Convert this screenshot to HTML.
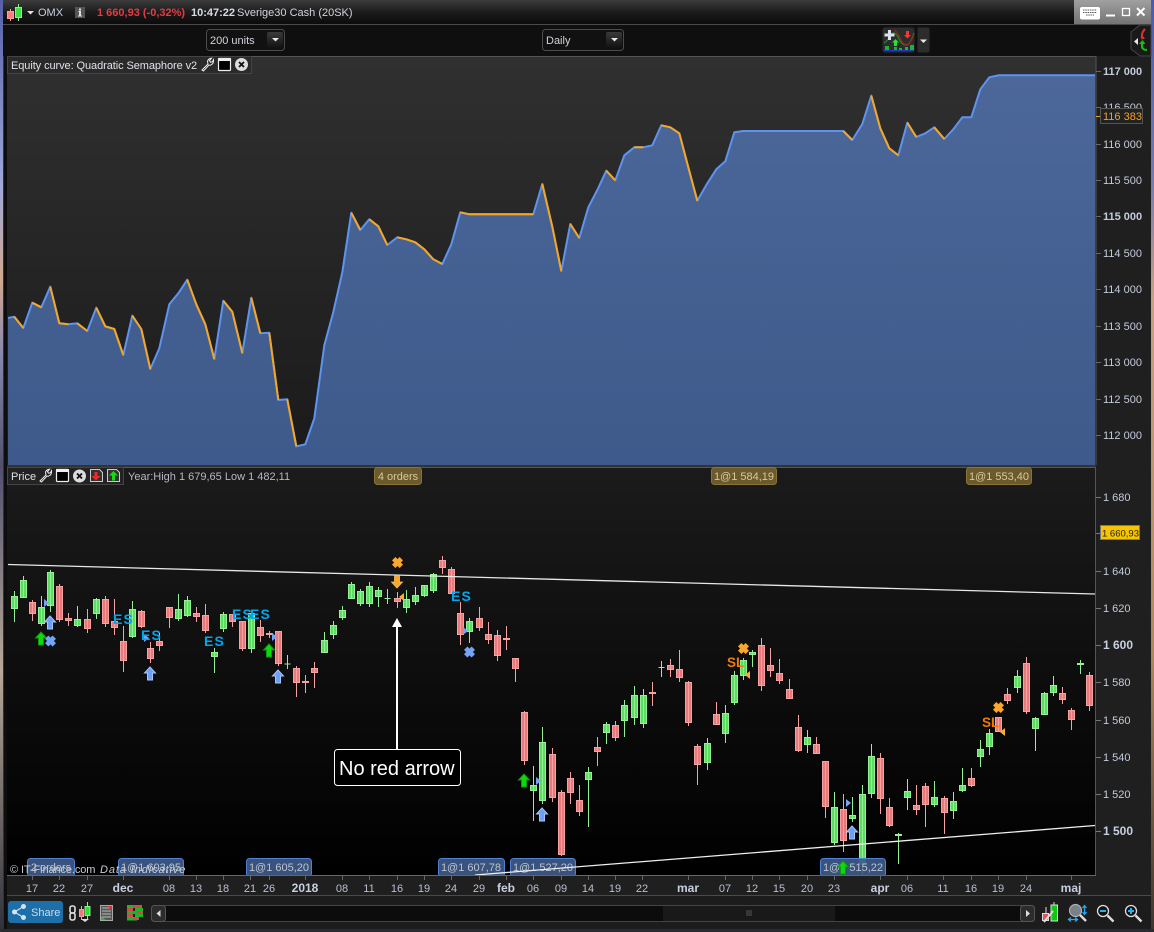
<!DOCTYPE html>
<html><head><meta charset="utf-8"><title>Chart</title>
<style>
html,body{margin:0;padding:0;background:#000;width:1154px;height:932px;overflow:hidden}
svg{display:block;position:absolute;left:0;top:0;font-family:"Liberation Sans",sans-serif;font-size:11px}
text{white-space:pre}
.ax{fill:#c4cbdc}
.axb{fill:#c8cfe0;font-weight:bold;font-size:12px}
.xl{fill:#b8c0d0;text-anchor:middle;font-size:11px}
.xb{fill:#c8cfe0;text-anchor:middle;font-size:12px;font-weight:bold}
.es{fill:#00a6ee;font-weight:bold;font-size:14px;letter-spacing:1.1px}
.sl{fill:#f07c00;font-weight:bold;font-size:13.5px}
.tg{fill:#bcc4d0;text-anchor:middle}
.tt{fill:#d8c89c;text-anchor:middle}
</style></head><body>
<svg width="1154" height="932" viewBox="0 0 1154 932" xmlns="http://www.w3.org/2000/svg">
<defs>
<linearGradient id="top" x1="0" y1="0" x2="0" y2="1"><stop offset="0" stop-color="#3c3c3c"/><stop offset=".5" stop-color="#1c1c1c"/><stop offset="1" stop-color="#0b0b0b"/></linearGradient>
<linearGradient id="eq" x1="0" y1="0" x2="0" y2="1"><stop offset="0" stop-color="#303030"/><stop offset="1" stop-color="#1a1a1a"/></linearGradient>
<linearGradient id="pr" x1="0" y1="0" x2="0" y2="1"><stop offset="0" stop-color="#1b1b1b"/><stop offset="1" stop-color="#000"/></linearGradient>
<linearGradient id="fill" gradientUnits="userSpaceOnUse" x1="0" y1="75" x2="0" y2="465"><stop offset="0" stop-color="#4c6799"/><stop offset="1" stop-color="#3d5a8b"/></linearGradient>
<linearGradient id="wl" x1="0" y1="0" x2="0" y2="1"><stop offset="0" stop-color="#5560a8"/><stop offset=".2" stop-color="#9fa8d8"/><stop offset=".3" stop-color="#d0a890"/><stop offset=".38" stop-color="#8888b0"/><stop offset=".5" stop-color="#50506e"/><stop offset=".72" stop-color="#b8a898"/><stop offset="1" stop-color="#30303c"/></linearGradient>
<linearGradient id="wr" x1="0" y1="0" x2="0" y2="1"><stop offset="0" stop-color="#4a5ab0"/><stop offset=".2" stop-color="#7a7cb0"/><stop offset=".32" stop-color="#c8a080"/><stop offset=".7" stop-color="#b08858"/><stop offset="1" stop-color="#40342c"/></linearGradient>
<linearGradient id="ctl" x1="0" y1="0" x2="0" y2="1"><stop offset="0" stop-color="#a0a0a0"/><stop offset="1" stop-color="#747474"/></linearGradient>
<linearGradient id="btn" x1="0" y1="0" x2="0" y2="1"><stop offset="0" stop-color="#3a3a3a"/><stop offset="1" stop-color="#111"/></linearGradient>
<path id="ub" d="M0-6.5 5.5-.5H2.5V6.5H-2.5V-.5H-5.500Z" fill="#6d9ff5" stroke="#a6c6fb" stroke-width="1"/>
<path id="ug" d="M0-6.5 5.5-.5H2.5V6.5H-2.5V-.5H-5.500Z" fill="#10d810" stroke="#0a9a0a" stroke-width="1"/>
<path id="xb" d="M-3.800-3.800 3.800 3.800M3.800-3.800-3.800 3.800" stroke="#74a4f8" stroke-width="4.800" fill="none"/>
<path id="xo" d="M-3.800-3.800 3.800 3.800M3.800-3.800-3.800 3.800" stroke="#f8a830" stroke-width="4.800" fill="none"/>
<path id="tb" d="M-2-4 3 0-2 4Z" fill="#74a4f8"/>
<path id="to" d="M2-4-3 0 2 4Z" fill="#f8b030"/>
</defs>

<!-- window base -->
<rect width="1154" height="932" fill="#1f1f1f"/>
<rect x="0" y="0" width="3" height="932" fill="url(#wl)"/>
<rect x="1151" y="0" width="3" height="932" fill="url(#wr)"/>
<rect x="3" y="0" width="4" height="932" fill="#0e0e0e"/>
<rect x="3" y="24" width="1" height="905" fill="#333"/>
<rect x="0" y="929" width="1154" height="3" fill="#2a2a36"/>

<!-- title bar -->
<rect x="3" y="0" width="1148" height="24" fill="url(#top)"/>
<rect x="3" y="24" width="1148" height="1" fill="#4a4a4a"/>
<rect x="3" y="25" width="1148" height="31" fill="#0f0f0f"/>
<path d="M10.500 9V21" stroke="#f8a0a0"/><rect x="7.500" y="11.500" width="6" height="7" fill="#f88080" stroke="#f8a0a0"/>
<path d="M18.500 4V21" stroke="#8cf08c"/><rect x="15.500" y="7.500" width="6" height="10" fill="#40e040" stroke="#8cf08c"/>
<path d="M27 11h7l-3.500 3.500z" fill="#e0e0e0"/>
<text x="38" y="16" fill="#c8d0e0">OMX</text>
<rect x="75" y="7" width="10" height="11" fill="#555"/><path d="M79 8.500h2v2h-2zM78.500 11h2.500v4.500h1v1h-4v-1h1v-3.500h-.5z" fill="#ddd"/>
<text x="97" y="16" fill="#e23c44" font-weight="bold">1 660,93 (-0,32%)</text>
<text x="191" y="16" fill="#d8dce4" font-weight="bold">10:47:22</text>
<text x="237" y="16" fill="#d0d4dc">Sverige30 Cash (20SK)</text>

<!-- window controls -->
<rect x="1074" y="0" width="77" height="24" fill="url(#ctl)"/>
<rect x="1080" y="7" width="20" height="12.500" rx="2" fill="#fff"/>
<path d="M1083 10h14M1083 12.500h14M1086 15h8" stroke="#555" stroke-width="1" stroke-dasharray="1.500 .8"/>
<rect x="1106" y="14.500" width="9" height="2" fill="#fff"/>
<rect x="1122.500" y="8.500" width="7" height="7" fill="none" stroke="#fff" stroke-width="1.300"/>
<path d="M1137 8l7.500 7.500M1144.500 8l-7.500 7.500" stroke="#fff" stroke-width="2"/>

<!-- toolbar -->
<rect x="206.500" y="29.500" width="78" height="21" rx="3" fill="#111" stroke="#4c4c4c"/>
<text x="210" y="44" fill="#d0d4dc">200 units</text>
<rect x="267" y="32" width="16" height="16" rx="2" fill="url(#btn)"/><path d="M272 38h7l-3.500 3.500z" fill="#e8e8e8"/>
<rect x="542.500" y="29.500" width="81" height="21" rx="3" fill="#111" stroke="#4c4c4c"/>
<text x="546" y="44" fill="#d0d4dc">Daily</text>
<rect x="606" y="32" width="16" height="16" rx="2" fill="url(#btn)"/><path d="M611 38h7l-3.500 3.500z" fill="#e8e8e8"/>
<rect x="882" y="27" width="33" height="26" rx="3" fill="#2c2c2c" stroke="#111"/>
<rect x="917" y="27" width="13" height="26" rx="2" fill="#2c2c2c" stroke="#111"/><path d="M920 39.500h7l-3.500 3.500z" fill="#e8e8e8"/>
<path d="M884 43q4-2 6-8 4-5 8 2 3 8 8 8 4 0 8-12" fill="none" stroke="#1a8a2a" stroke-width="1.200"/>
<path d="M894 30q4 2 7 10 3 6 7 4 4-3 6-10" fill="none" stroke="#922" stroke-width="1.200"/>
<path d="M888 30h3v3.500h3.500v3h-3.500v3.500h-3v-3.500h-3.500v-3h3.500z" fill="#dde0ee"/>
<path d="M906 31h3v4h2l-3.500 3.500-3.500-3.500h2z" fill="#f03838"/>
<path d="M895.500 39l3.500 3.500h-2v3.500h-3v-3.500h-2z" fill="#28e038"/>
<path d="M885 46h4v4h-4zM894 47h3v3h-3zM899 48h3v2h-3zM905 47h3v3h-3zM910 45h4v5h-4z" fill="#14b828"/>
<rect x="884" y="50" width="30" height="1" fill="#2838c8"/>
<path d="M1140 25h11v31h-11l-9-7v-17z" fill="#1a1a1a" stroke="#444"/>
<path d="M1138 38l-4 3.500 4 3.500z" fill="#e8e8e8"/>
<path d="M1145 29q-4 4-3 9" stroke="#e03030" stroke-width="2" fill="none"/><path d="M1142 35l3 3.500-4 1z" fill="#e03030"/>
<path d="M1142 42v5q1 3 5 3" stroke="#14c014" stroke-width="2" fill="none"/><path d="M1139 44l3.500-4 3 4z" fill="#14c014"/>

<!-- equity panel -->
<rect x="7" y="56" width="1089" height="409" fill="url(#eq)"/>
<path d="M7 56.500H1096V465" fill="none" stroke="#555"/>
<path d="M8 465V318L14.300 316.700 23.300 328 32.300 302.700 41.300 307.300 50.300 286.700 59.300 323.300 68.300 324.300 77.300 323.300 87.300 331 96.300 307.700 105.300 326.300 114.300 329 123.300 355 132.300 315.700 141.300 329 150.300 369 159.300 348.300 169.300 304.300 178.300 293.300 187.300 279.700 196.300 304.300 205.300 324.300 214.300 359 223.300 300.700 232.300 311.700 242.300 353 251.300 297.700 260.300 333.300 269.300 332.700 278.300 400 287.300 399.300 296.300 446.300 305.300 444.300 314.300 418.300 324.300 345.300 333.300 312 342.300 272.300 351.300 212.700 360.300 230 369.300 219.300 378.300 226.300 387.300 245 397.300 237.300 406.300 239.300 415.300 242.300 424.300 249.300 433.300 259.300 442.300 264 451.300 244.300 460.300 212.300 469.300 214.300 533.300 214.300 542.300 184 552.300 226.700 561.300 271 570.300 224 579.300 238 588.300 207.300 597.300 190 606.300 170.700 615.300 180.300 624.300 155.300 634.300 147.300 643.300 147.300 652.300 145.300 661.300 125.300 670.300 127.300 679.300 133.300 688.300 167.300 697.300 200.700 707.300 183.300 716.300 169.300 725.300 161.300 734.300 132.300 743.300 131 843.300 131 852.300 140 862.300 124 871.300 95.700 880.300 128.300 889.300 148.300 898.300 155.300 907.300 122.700 916.300 137 925.300 133.300 934.300 127.300 944.300 139 953.300 129.300 962.300 117.300 971.300 117.300 980.300 89.300 989.300 77.300 998.300 75.300 1095 75.300V465Z" fill="url(#fill)"/>
<path d="M8 318L14.300 316.700 23.300 328 32.300 302.700 41.300 307.300 50.300 286.700 59.300 323.300 68.300 324.300 77.300 323.300 87.300 331 96.300 307.700 105.300 326.300 114.300 329 123.300 355 132.300 315.700 141.300 329 150.300 369 159.300 348.300 169.300 304.300 178.300 293.300 187.300 279.700 196.300 304.300 205.300 324.300 214.300 359 223.300 300.700 232.300 311.700 242.300 353 251.300 297.700 260.300 333.300 269.300 332.700 278.300 400 287.300 399.300 296.300 446.300 305.300 444.300 314.300 418.300 324.300 345.300 333.300 312 342.300 272.300 351.300 212.700 360.300 230 369.300 219.300 378.300 226.300 387.300 245 397.300 237.300 406.300 239.300 415.300 242.300 424.300 249.300 433.300 259.300 442.300 264 451.300 244.300 460.300 212.300 469.300 214.300 533.300 214.300 542.300 184 552.300 226.700 561.300 271 570.300 224 579.300 238 588.300 207.300 597.300 190 606.300 170.700 615.300 180.300 624.300 155.300 634.300 147.300 643.300 147.300 652.300 145.300 661.300 125.300 670.300 127.300 679.300 133.300 688.300 167.300 697.300 200.700 707.300 183.300 716.300 169.300 725.300 161.300 734.300 132.300 743.300 131 843.300 131 852.300 140 862.300 124 871.300 95.700 880.300 128.300 889.300 148.300 898.300 155.300 907.300 122.700 916.300 137 925.300 133.300 934.300 127.300 944.300 139 953.300 129.300 962.300 117.300 971.300 117.300 980.300 89.300 989.300 77.300 998.300 75.300 1095 75.300" fill="none" stroke="#5f93f0" stroke-width="2" stroke-linejoin="round"/>
<path d="M14.300 316.700 23.300 328M32.300 302.700 41.300 307.300M50.300 286.700 59.300 323.300 68.300 324.300M77.300 323.300 87.300 331M96.300 307.700 105.300 326.300 114.300 329 123.300 355M132.300 315.700 141.300 329 150.300 369M187.300 279.700 196.300 304.300 205.300 324.300 214.300 359M223.300 300.700 232.300 311.700 242.300 353M251.300 297.700 260.300 333.300M269.300 332.700 278.300 400M287.300 399.300 296.300 446.300M351.300 212.700 360.300 230M369.300 219.300 378.300 226.300 387.300 245M397.300 237.300 406.300 239.300 415.300 242.300 424.300 249.300 433.300 259.300 442.300 264M460.300 212.300 469.300 214.300 533.300 214.300M542.300 184 552.300 226.700 561.300 271M570.300 224 579.300 238M606.300 170.700 615.300 180.300M634.300 147.300 643.300 147.300M661.300 125.300 670.300 127.300 679.300 133.300 688.300 167.300 697.300 200.700M843.300 131 852.300 140M871.300 95.700 880.300 128.300 889.300 148.300 898.300 155.300M907.300 122.700 916.300 137M934.300 127.300 944.300 139" fill="none" stroke="#f5a624" stroke-width="2" stroke-linejoin="round"/>

<!-- equity axis -->
<path d="M1096 71.500h5M1096 107.500h5M1096 144.500h5M1096 180.500h5M1096 216.500h5M1096 253.500h5M1096 289.500h5M1096 326.500h5M1096 362.500h5M1096 399.500h5M1096 435.500h5" stroke="#666"/>
<g class="ax">
<text x="1103" y="75" font-weight="bold">117 000</text>
<text x="1103" y="111">116 500</text>
<text x="1103" y="148">116 000</text>
<text x="1103" y="184">115 500</text>
<text x="1103" y="220" font-weight="bold">115 000</text>
<text x="1103" y="257">114 500</text>
<text x="1103" y="293">114 000</text>
<text x="1103" y="330">113 500</text>
<text x="1103" y="366">113 000</text>
<text x="1103" y="403">112 500</text>
<text x="1103" y="439">112 000</text>
</g>
<path d="M1096 116.500h5" stroke="#f2a224"/>
<rect x="1100.500" y="108.500" width="42" height="15" fill="#222" stroke="#555"/>
<text x="1103" y="120" fill="#f0a030">116 383</text>

<!-- equity label -->
<rect x="7.500" y="56.500" width="244" height="17" fill="#2a2a2a" stroke="#444"/>
<text x="11" y="69" fill="#dfe2e8" letter-spacing="-.08">Equity curve: Quadratic Semaphore v2</text>
<path d="M202 70l6-6q-1.500-4 2-5.500l1.500-.3-2 2.500 1 1.500 2-.5 1-2q.5 4-3 5.500l-1.500-.2-5.500 6z" fill="none" stroke="#eee" stroke-width="1"/>
<rect x="218.500" y="58.500" width="12" height="12" rx="1" fill="#000" stroke="#eee" stroke-width="1.200"/><rect x="218" y="58" width="13" height="3" fill="#eee"/>
<circle cx="241.500" cy="64.500" r="6.500" fill="#ddd"/><path d="M239 62l5 5M244 62l-5 5" stroke="#111" stroke-width="1.800"/>

<!-- price panel -->
<rect x="7" y="465" width="1089" height="2" fill="#333"/>
<rect x="7" y="467" width="1089" height="408" fill="url(#pr)"/>
<path d="M7 467.500H1096" stroke="#555"/>
<rect x="1095" y="467" width="1" height="408" fill="#555"/>

<!-- candles red -->
<path fill="#e87a7c" stroke="#f7a2a2" d="M32.500 600V621M29.500 602.500h6v11h-6zM59.500 584V622M56.500 586.500h6v33h-6zM68.500 613V626M65.500 618.500h6v2h-6zM87.500 609V633M84.500 619.500h6v9h-6zM105.500 596V627M102.500 599.500h6v24h-6zM114.500 599V635M111.500 621.500h6v6h-6zM123.500 626V672M120.500 641.500h6v19h-6zM141.500 610V628M138.500 611.500h6v15h-6zM150.500 642V663M147.500 648.500h6v10h-6zM159.500 633V651M156.500 641.500h6v4h-6zM169.500 607V628M166.500 607.500h6v10h-6zM196.500 607V622M193.500 613.500h6v3h-6zM205.500 604V633M202.500 615.500h6v15h-6zM232.500 614V627M229.500 614.500h6v7h-6zM242.500 621V651M239.500 621.500h6v27h-6zM260.500 620V642M257.500 627.500h6v8h-6zM269.500 631V638M266.500 633.500h6v1h-6zM278.500 631V666M275.500 631.500h6v32h-6zM296.500 666V697M293.500 668.500h6v14h-6zM305.500 675V693M302.500 681.500h6v1h-6zM314.500 662V688M311.500 668.500h6v4h-6zM397.500 592V608M394.500 598.500h6v3h-6zM442.500 556V574M439.500 560.500h6v7h-6zM451.500 567V594M448.500 569.500h6v24h-6zM460.500 602V645M457.500 613.500h6v21h-6zM479.500 607V631M476.500 618.500h6v9h-6zM488.500 622V644M485.500 634.500h6v5h-6zM497.500 630V661M494.500 635.500h6v20h-6zM506.500 626V650M503.500 638.500h6v1h-6zM515.500 658V682M512.500 658.500h6v10h-6zM524.500 711V765M521.500 712.500h6v48h-6zM552.500 748V802M549.500 754.500h6v43h-6zM561.500 790V856M558.500 792.500h6v62h-6zM570.500 772V804M567.500 778.500h6v14h-6zM579.500 785V816M576.500 800.500h6v11h-6zM597.500 737V766M594.500 747.500h6v4h-6zM615.500 721V741M612.500 725.500h6v12h-6zM652.500 682V706M649.500 692.500h6v1h-6zM670.500 659V677M667.500 665.500h6v4h-6zM679.500 650V682M676.500 669.500h6v8h-6zM688.500 681V726M685.500 682.500h6v40h-6zM697.500 744V785M694.500 746.500h6v18h-6zM716.500 702V725M713.500 714.500h6v10h-6zM761.500 638V691M758.500 645.500h6v40h-6zM770.500 648V677M767.500 665.500h6v5h-6zM779.500 659V684M776.500 673.500h6v7h-6zM789.500 679V699M786.500 689.500h6v9h-6zM798.500 715V752M795.500 727.500h6v23h-6zM816.500 737V754M813.500 744.500h6v9h-6zM825.500 761V818M822.500 761.500h6v45h-6zM843.500 794V852M840.500 809.500h6v31h-6zM880.500 753V814M877.500 758.500h6v40h-6zM889.500 798V827M886.500 807.500h6v18h-6zM916.500 785V815M913.500 805.500h6v4h-6zM925.500 783V827M922.500 786.500h6v18h-6zM944.500 796V834M941.500 798.500h6v14h-6zM971.500 768V787M968.500 778.500h6v7h-6zM998.500 717V732M995.500 717.500h6v14h-6zM1007.500 688V704M1004.500 694.500h6v6h-6zM1026.500 657V714M1023.500 663.500h6v48h-6zM1062.500 687V704M1059.500 693.500h6v6h-6zM1071.500 708V730M1068.500 710.500h6v9h-6zM1089.500 672V711M1086.500 675.500h6v30h-6z"/>
<!-- candles green -->
<path fill="#5cdc60" stroke="#94f094" d="M14.500 591V622M11.500 596.500h6v12h-6zM23.500 576V598M20.500 580.500h6v17h-6zM41.500 596V626M38.500 607.500h6v16h-6zM50.500 570V612M47.500 572.500h6v33h-6zM77.500 606V627M74.500 619.500h6v6h-6zM96.500 598V619M93.500 599.500h6v14h-6zM132.500 601V638M129.500 609.500h6v27h-6zM178.500 594V621M175.500 609.500h6v9h-6zM187.500 596V617M184.500 600.500h6v15h-6zM214.500 648V673M211.500 652.500h6v4h-6zM223.500 612V632M220.500 614.500h6v14h-6zM251.500 610V653M248.500 613.500h6v35h-6zM287.500 655V669M284.500 664h6v0h-6zM324.500 632V653M321.500 640.500h6v12h-6zM333.500 621V639M330.500 625.500h6v9h-6zM342.500 606V620M339.500 610.500h6v7h-6zM351.500 582V599M348.500 584.500h6v14h-6zM360.500 589V606M357.500 591.500h6v12h-6zM369.500 582V607M366.500 586.500h6v17h-6zM378.500 587V607M375.500 590.500h6v6h-6zM387.500 589V604M384.500 598.500h6v0h-6zM406.500 590V613M403.500 599.500h6v8h-6zM415.500 587V605M412.500 595.500h6v6h-6zM424.500 585V597M421.500 585.500h6v10h-6zM433.500 573V593M430.500 574.500h6v16h-6zM469.500 618V643M466.500 621.500h6v10h-6zM533.500 766V821M530.500 785.500h6v5h-6zM542.500 727V804M539.500 742.500h6v58h-6zM588.500 767V827M585.500 772.500h6v7h-6zM606.500 722V744M603.500 724.500h6v8h-6zM624.500 700V737M621.500 705.500h6v15h-6zM634.500 686V725M631.500 695.500h6v22h-6zM643.500 689V728M640.500 695.500h6v28h-6zM661.500 661V677M658.500 667.500h6v0h-6zM707.500 738V770M704.500 743.500h6v19h-6zM725.500 705V743M722.500 713.500h6v20h-6zM734.500 671V705M731.500 675.500h6v27h-6zM743.500 658V680M740.500 660.500h6v15h-6zM752.500 650V667M749.500 652.500h6v2h-6zM807.500 730V753M804.500 737.500h6v7h-6zM834.500 792V845M831.500 807.500h6v35h-6zM852.500 797V822M849.500 815.500h6v3h-6zM862.500 785V875M859.500 794.500h6v70h-6zM871.500 744V798M868.500 756.500h6v37h-6zM898.500 833V864M895.500 834.500h6v1h-6zM907.500 779V810M904.500 791.500h6v6h-6zM934.500 781V807M931.500 797.500h6v7h-6zM953.500 792V819M950.500 801.500h6v9h-6zM962.500 768V792M959.500 785.500h6v5h-6zM980.500 740V767M977.500 749.500h6v7h-6zM989.500 729V755M986.500 733.500h6v13h-6zM1017.500 670V693M1014.500 676.500h6v11h-6zM1035.500 717V751M1032.500 718.500h6v10h-6zM1044.500 692V715M1041.500 693.500h6v21h-6zM1053.500 676V696M1050.500 685.500h6v7h-6zM1080.500 660V674M1077.500 663.500h6v1h-6z"/>

<!-- bottom tags -->
<g fill="#3e5a88" fill-opacity=".92" stroke="#4d82d8">
<rect x="27.500" y="858.500" width="47" height="18" rx="3"/>
<rect x="118.500" y="858.500" width="65" height="18" rx="3"/>
<rect x="246.500" y="858.500" width="65" height="18" rx="3"/>
<rect x="438.500" y="858.500" width="66" height="18" rx="3"/>
<rect x="510.500" y="858.500" width="65" height="18" rx="3"/>
<rect x="820.500" y="858.500" width="65" height="18" rx="3"/>
</g>
<g class="tg">
<text x="51" y="871">2 orders</text>
<text x="151" y="871">1@1 603,95</text>
<text x="279" y="871">1@1 605,20</text>
<text x="471" y="871">1@1 607,78</text>
<text x="543" y="871">1@1 527,20</text>
<text x="853" y="871">1@1 515,22</text>
</g>
<text x="10" y="873" fill="#c8ccd4" letter-spacing="-.1">© IT-Finance.com</text>
<text x="100" y="873" fill="#c8ccd4" font-style="italic" letter-spacing=".9">Data Indicative</text>

<!-- top tags -->
<g fill="#6a5a2c" stroke="#8a7434">
<rect x="374.500" y="467.500" width="47" height="17" rx="3"/>
<rect x="711.500" y="467.500" width="65" height="17" rx="3"/>
<rect x="966.500" y="467.500" width="65" height="17" rx="3"/>
</g>
<g class="tt">
<text x="398" y="480">4 orders</text>
<text x="744" y="480">1@1 584,19</text>
<text x="999" y="480">1@1 553,40</text>
</g>

<!-- trend lines -->
<path d="M8 564.500L1095 594" stroke="#e8e8e8" stroke-width="1.300" fill="none"/>
<path d="M475 875L1095 825.500" stroke="#eeeeee" stroke-width="1.300" fill="none"/>

<!-- markers -->
<use href="#ub" x="50" y="622.500"/><use href="#ub" x="150" y="673.500"/><use href="#ub" x="278" y="676.500"/><use href="#ub" x="542" y="814.500"/><use href="#ub" x="852" y="832.500"/>
<use href="#ug" x="41" y="638.500"/><use href="#ug" x="269" y="650.500"/><use href="#ug" x="524" y="780.500"/><use href="#ug" x="843" y="867.500"/>
<path d="M394.500 575.500h5v6.500h3l-5.500 6-5.500-6h3z" fill="#f8a828" stroke="#f8c060" stroke-width=".8"/>
<use href="#xb" x="50.500" y="641"/><use href="#xb" x="469.500" y="652"/>
<use href="#xo" x="397.500" y="562.500"/><use href="#xo" x="743.500" y="648.500"/><use href="#xo" x="998.500" y="707.500"/>
<use href="#tb" x="46" y="603"/><use href="#tb" x="146" y="638"/><use href="#tb" x="274" y="637"/><use href="#tb" x="465" y="631"/><use href="#tb" x="538" y="781"/><use href="#tb" x="848" y="803"/>
<use href="#to" x="402" y="597"/><use href="#to" x="748" y="675"/><use href="#to" x="1003" y="732"/>
<text class="es" x="113" y="624">ES</text>
<text class="es" x="141" y="640">ES</text>
<text class="es" x="204" y="646">ES</text>
<text class="es" x="232" y="619">ES</text>
<text class="es" x="250" y="619">ES</text>
<text class="es" x="451" y="601">ES</text>
<text class="sl" x="727" y="667">SL</text>
<text class="sl" x="982" y="727">SL</text>

<!-- annotation -->
<rect x="396" y="626" width="2" height="126" fill="#fff"/>
<path d="M397 618l5 9h-10z" fill="#fff"/>
<rect x="334.500" y="749.500" width="126" height="36" rx="3" fill="#000" stroke="#fff"/>
<text x="339" y="775" fill="#fff" font-size="20">No red arrow</text>

<!-- price axis -->
<path d="M1096 497.500h5M1096 533.500h5M1096 571.500h5M1096 608.500h5M1096 645.500h5M1096 682.500h5M1096 720.500h5M1096 757.500h5M1096 794.500h5M1096 831.500h5" stroke="#777"/>
<g class="ax">
<text x="1103" y="501">1 680</text>
<text x="1103" y="575">1 640</text>
<text x="1103" y="612">1 620</text>
<text class="axb" x="1103" y="649">1 600</text>
<text x="1103" y="686">1 580</text>
<text x="1103" y="724">1 560</text>
<text x="1103" y="761">1 540</text>
<text x="1103" y="798">1 520</text>
<text class="axb" x="1103" y="835">1 500</text>
</g>
<rect x="1100.500" y="525.500" width="39" height="14" fill="#f6c400" stroke="#777"/>
<text x="1102" y="536.500" fill="#222" font-size="9.500">1 660,93</text>

<!-- price label -->
<rect x="7.500" y="467.500" width="116" height="17" fill="#232323" stroke="#444"/>
<text x="11" y="480" fill="#dfe2e8">Price</text>
<path d="M40 481l6-6q-1.500-4 2-5.500l1.500-.3-2 2.500 1 1.500 2-.5 1-2q.5 4-3 5.500l-1.500-.2-5.500 6z" fill="none" stroke="#eee" stroke-width="1"/>
<rect x="56.500" y="469.500" width="12" height="12" rx="1" fill="#000" stroke="#eee" stroke-width="1.200"/><rect x="56" y="469" width="13" height="3" fill="#eee"/>
<circle cx="79.500" cy="476" r="6.500" fill="#ddd"/><path d="M77 473.500l5 5M82 473.500l-5 5" stroke="#111" stroke-width="1.800"/>
<path d="M90.500 469.500h9l3 3v9h-12z" fill="#333" stroke="#ccc"/><path d="M94.500 472h3v4h3l-4.500 4.500-4.500-4.500h3z" fill="#f02828"/>
<path d="M107.500 469.500h9l3 3v9h-12z" fill="#333" stroke="#ccc"/><path d="M113.500 471l4.500 4.500h-3v5h-3v-5h-3z" fill="#18d818"/>
<text x="128" y="480" fill="#b4b8c0">Year:High 1 679,65 Low 1 482,11</text>

<!-- x axis -->
<rect x="7" y="875" width="1089" height="1" fill="#666"/>
<rect x="7" y="876" width="1144" height="20" fill="#1f1f1f"/>
<path d="M32.500 876v4M59.500 876v4M87.500 876v4M123.500 876v4M169.500 876v4M196.500 876v4M223.500 876v4M250.500 876v4M269.500 876v4M305.500 876v4M342.500 876v4M369.500 876v4M397.500 876v4M424.500 876v4M451.500 876v4M479.500 876v4M506.500 876v4M533.500 876v4M561.500 876v4M588.500 876v4M615.500 876v4M642.500 876v4M688.500 876v4M725.500 876v4M752.500 876v4M779.500 876v4M807.500 876v4M834.500 876v4M880.500 876v4M907.500 876v4M943.500 876v4M971.500 876v4M998.500 876v4M1026.500 876v4M1071.500 876v4" stroke="#666"/>
<g>
<text class="xl" x="32" y="892">17</text><text class="xl" x="59" y="892">22</text><text class="xl" x="87" y="892">27</text><text class="xb" x="123" y="892">dec</text>
<text class="xl" x="169" y="892">08</text><text class="xl" x="196" y="892">13</text><text class="xl" x="223" y="892">18</text><text class="xl" x="250" y="892">21</text><text class="xl" x="269" y="892">26</text>
<text class="xb" x="305" y="892">2018</text><text class="xl" x="342" y="892">08</text><text class="xl" x="369" y="892">11</text><text class="xl" x="397" y="892">16</text><text class="xl" x="424" y="892">19</text><text class="xl" x="451" y="892">24</text><text class="xl" x="479" y="892">29</text>
<text class="xb" x="506" y="892">feb</text><text class="xl" x="533" y="892">06</text><text class="xl" x="561" y="892">09</text><text class="xl" x="588" y="892">14</text><text class="xl" x="615" y="892">19</text><text class="xl" x="642" y="892">22</text>
<text class="xb" x="688" y="892">mar</text><text class="xl" x="725" y="892">07</text><text class="xl" x="752" y="892">12</text><text class="xl" x="779" y="892">15</text><text class="xl" x="807" y="892">20</text><text class="xl" x="834" y="892">23</text>
<text class="xb" x="880" y="892">apr</text><text class="xl" x="907" y="892">06</text><text class="xl" x="943" y="892">11</text><text class="xl" x="971" y="892">16</text><text class="xl" x="998" y="892">19</text><text class="xl" x="1026" y="892">24</text><text class="xb" x="1071" y="892">maj</text>
</g>

<!-- bottom bar -->
<rect x="7" y="896" width="1144" height="33" fill="#1c1c1c"/>
<rect x="7" y="895" width="1144" height="1" fill="#4a4a4a"/>
<rect x="8" y="901" width="55" height="22" rx="3" fill="#1e6ea8"/>
<circle cx="14.500" cy="912" r="2.500" fill="#cfe4f4"/><circle cx="23.500" cy="906.500" r="2.500" fill="#cfe4f4"/><circle cx="23.500" cy="917.500" r="2.500" fill="#cfe4f4"/>
<path d="M14.500 912l9-5.500M14.500 912l9 5.500" stroke="#cfe4f4" stroke-width="1.200"/>
<text x="31" y="916" fill="#c8dcec">Share</text>
<rect x="70" y="906" width="5" height="7" rx="2" fill="none" stroke="#ddd" stroke-width="1.600"/><rect x="70" y="913" width="5" height="7" rx="2" fill="none" stroke="#ddd" stroke-width="1.600"/>
<path d="M81.500 906v14" stroke="#f8a0a0"/><rect x="79.500" y="909.500" width="4" height="7" fill="#f07878" stroke="#f8a0a0"/>
<path d="M87.500 902v18" stroke="#8cf08c"/><rect x="85" y="906.500" width="5" height="9" fill="#30e030" stroke="#8cf08c"/>
<path d="M81 919h8l-4 3z" fill="#ddd"/>
<rect x="100.500" y="905.500" width="12" height="15" fill="#555" stroke="#aaa"/>
<path d="M102 908h9M102 911h9M102 914h9M102 917h9" stroke="#bbb"/>
<path d="M107 906h5v4z" fill="#e03030"/><path d="M101 920v-4l5 4z" fill="#20c030"/>
<path d="M127 905h10v3h-10z M135 908h8v3h-8z M127 911h10v3h-10zM135 914h8v3h-8zM127 917h10v3.500h-10z" fill="#18b828"/>
<path d="M133 905h9v3h-9zM137 911h6v3h-6zM133 917h6v3h-6zM127 908h6v3h-6zM127 914h6v3h-6z" fill="#d84848"/>

<rect x="151.500" y="905.500" width="883" height="16" rx="3" fill="#0c0c0c" stroke="#444"/>
<rect x="663" y="906" width="172" height="15" fill="#191919"/>
<path d="M746 911h6M746 913h6M746 915h6" stroke="#555"/>
<rect x="151.500" y="905.500" width="14" height="16" rx="3" fill="#2c2c2c" stroke="#555"/><path d="M160.500 910v7l-4-3.500z" fill="#ddd"/>
<rect x="1020.500" y="905.500" width="14" height="16" rx="3" fill="#2c2c2c" stroke="#555"/><path d="M1026 910v7l4-3.500z" fill="#ddd"/>

<!-- bottom right icons -->
<path d="M1054 902v19" stroke="#ddd"/><rect x="1051" y="905" width="6.500" height="16" fill="#10c810" stroke="#ddd"/>
<path d="M1046 907v14" stroke="#ddd"/><rect x="1042.500" y="913.500" width="6" height="7" fill="#e05858" stroke="#ddd"/>
<path d="M1044 922l9-11" stroke="#ddd" stroke-width="2"/>
<circle cx="1075.500" cy="910.500" r="6" fill="#7a8088" stroke="#aab0b8" stroke-width="1.200"/>
<path d="M1080 915l6 6" stroke="#ddd" stroke-width="2.400"/>
<path d="M1084.500 906v8M1082.500 908l2-2.500 2 2.500M1082.500 912l2 2.500 2-2.500" stroke="#28a8e8" fill="none" stroke-width="1.300"/>
<path d="M1069 919.500h8M1071 917.500l-2.500 2 2.500 2M1075 917.500l2.500 2-2.500 2" stroke="#28a8e8" fill="none" stroke-width="1.300"/>
<circle cx="1103" cy="911" r="5.500" fill="#111" stroke="#e0e0e0" stroke-width="1.300"/><path d="M1100 911h6" stroke="#28b0f0" stroke-width="2"/><path d="M1107.500 915.500l6 6" stroke="#ddd" stroke-width="2.400"/>
<circle cx="1131" cy="911" r="5.500" fill="#111" stroke="#e0e0e0" stroke-width="1.300"/><path d="M1128 911h6M1131 908v6" stroke="#28b0f0" stroke-width="2"/><path d="M1135.500 915.500l6 6" stroke="#ddd" stroke-width="2.400"/>
</svg>
</body></html>
